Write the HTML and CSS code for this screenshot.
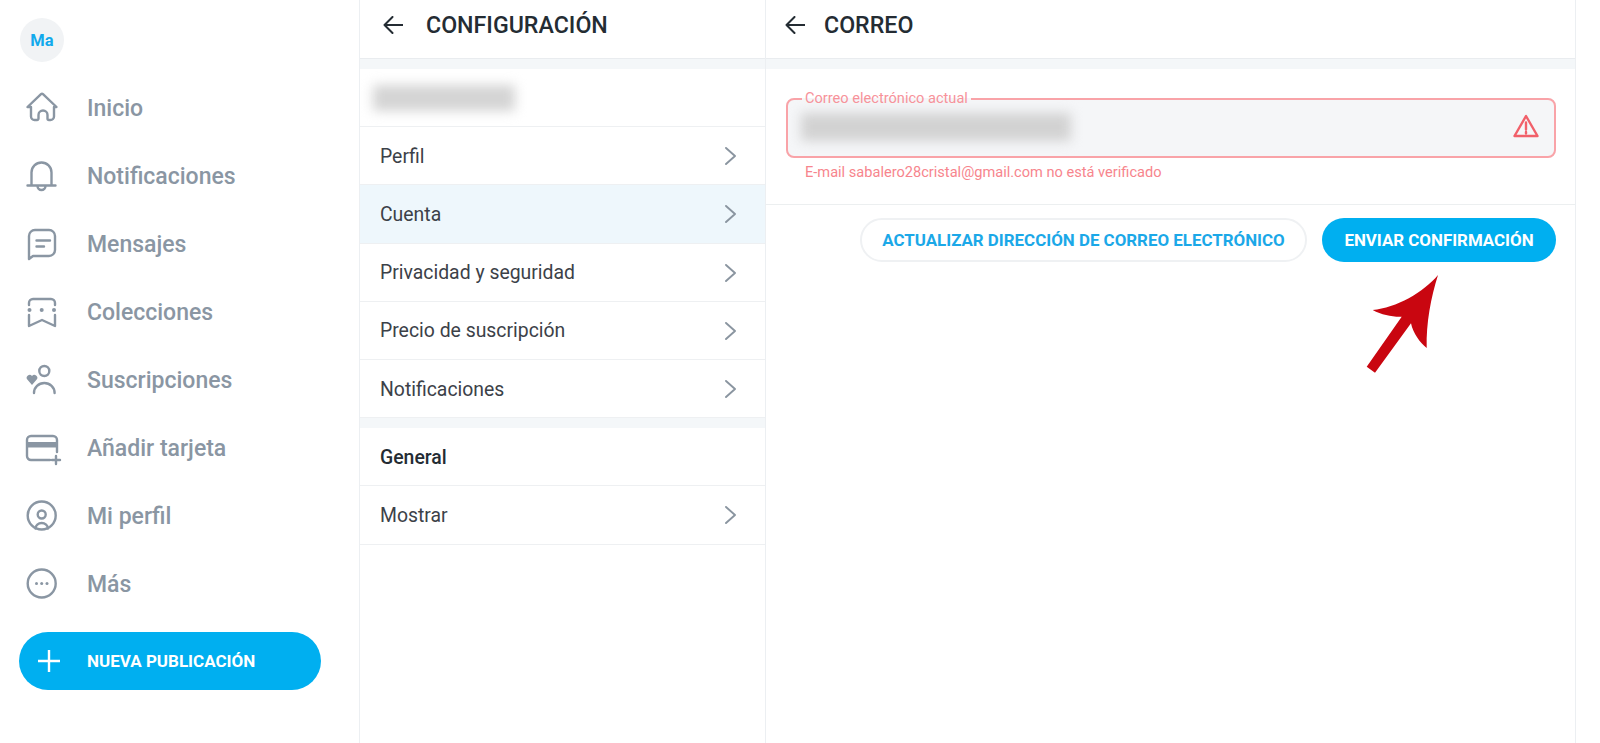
FILE: index.html
```html
<!DOCTYPE html>
<html lang="es">
<head>
<meta charset="utf-8">
<title>Correo</title>
<link rel="stylesheet" href="styles.css">
</head>
<body>
<div class="app">
  <aside class="sidebar">
    <div class="avatar">Ma</div>
    <nav class="nav">
      <a class="nav-item"><svg class="nav-icon" viewBox="0 0 32 32"><path d="M1.500 16 15 3.200a1.500 1.500 0 0 1 2 0L30.500 16H28v9.500a3.500 3.500 0 0 1-3.500 3.500h-1.500a1.500 1.500 0 0 1-1.500-1.500V24a4.500 4.500 0 0 0-9 0v3.500A1.500 1.500 0 0 1 11 29H8.500A3.500 3.500 0 0 1 5 25.500V16Z"/></svg><span>Inicio</span></a>
      <a class="nav-item"><svg class="nav-icon" viewBox="0 0 32 32"><path d="M1.500 26.500h28M5.500 26.500V13.500a10 10 0 0 1 10-10 10 10 0 0 1 10 10v13M11.500 27a4 4 0 0 0 8 0"/></svg><span>Notificaciones</span></a>
      <a class="nav-item"><svg class="nav-icon" viewBox="0 0 32 32"><path d="M3 32V9a6 6 0 0 1 6-6h14a6 6 0 0 1 6 6v14a6 6 0 0 1-6 6H7ZM10.500 13.500H24M10.500 19.500H18"/></svg><span>Mensajes</span></a>
      <a class="nav-item"><svg class="nav-icon" viewBox="0 0 32 32"><path d="M3 10V8a4 4 0 0 1 4-4h18a4 4 0 0 1 4 4v2M3 20v11l13-6 13 6V20"/><circle class="dot" cx="3.500" cy="15" r="2"/><circle class="dot" cx="15.700" cy="15" r="2"/><circle class="dot" cx="28" cy="15" r="2"/></svg><span>Colecciones</span></a>
      <a class="nav-item"><svg class="nav-icon" viewBox="0 0 32 32"><circle cx="18.300" cy="8" r="5"/><path d="M8 30a10.300 10 0 0 1 20.600 0"/><path class="dot" d="M6 22 1.300 16.500a2.800 2.800 0 0 1 4.700-3.500 2.800 2.800 0 0 1 4.700 3.500Z"/></svg><span>Suscripciones</span></a>
      <a class="nav-item"><svg class="nav-icon" viewBox="0 0 32 32"><path d="M24 29H5a4 4 0 0 1-4-4V9a4 4 0 0 1 4-4h22a4 4 0 0 1 4 4v12"/><path class="band" d="M1 11h30v5.500H1z"/><path d="M30 25v8M26 29h8"/></svg><span>Añadir tarjeta</span></a>
      <a class="nav-item"><svg class="nav-icon" viewBox="0 0 32 32"><circle cx="15.700" cy="16.500" r="14"/><circle cx="15.700" cy="15.500" r="4"/><path d="M9.500 29.500a6.200 5.500 0 0 1 12.400 0"/></svg><span>Mi perfil</span></a>
      <a class="nav-item"><svg class="nav-icon" viewBox="0 0 32 32"><circle cx="15.700" cy="16.500" r="14"/><circle class="dot" cx="10.500" cy="16.500" r="1.500"/><circle class="dot" cx="15.700" cy="16.500" r="1.500"/><circle class="dot" cx="21" cy="16.500" r="1.500"/></svg><span>Más</span></a>
    </nav>
    <button class="new-post"><svg class="plus" viewBox="0 0 22 22"><path d="M11 0v22M0 11h22"/></svg><span>NUEVA PUBLICACIÓN</span></button>
  </aside>

  <section class="settings">
    <header class="head">
      <svg class="back" viewBox="0 0 20 18"><path d="M19.500 9H1.500M9.500 1 1.500 9l8 8"/></svg>
      <h1 class="title">CONFIGURACIÓN</h1>
    </header>
    <div class="band-gap"></div>
    <div class="row"><div class="blur-name"></div></div>
    <a class="row">Perfil<svg class="chev" viewBox="0 0 11 18"><path d="m1 1 9 8-9 8"/></svg></a>
    <a class="row row-active">Cuenta<svg class="chev" viewBox="0 0 11 18"><path d="m1 1 9 8-9 8"/></svg></a>
    <a class="row">Privacidad y seguridad<svg class="chev" viewBox="0 0 11 18"><path d="m1 1 9 8-9 8"/></svg></a>
    <a class="row">Precio de suscripción<svg class="chev" viewBox="0 0 11 18"><path d="m1 1 9 8-9 8"/></svg></a>
    <a class="row">Notificaciones<svg class="chev" viewBox="0 0 11 18"><path d="m1 1 9 8-9 8"/></svg></a>
    <div class="band-gap"></div>
    <div class="row row-head">General</div>
    <a class="row">Mostrar<svg class="chev" viewBox="0 0 11 18"><path d="m1 1 9 8-9 8"/></svg></a>
  </section>

  <main class="mail">
    <header class="head head-mail">
      <svg class="back" viewBox="0 0 20 18"><path d="M19.500 9H1.500M9.500 1 1.500 9l8 8"/></svg>
      <h1 class="title">CORREO</h1>
    </header>
    <div class="band-gap"></div>
    <div class="form">
      <fieldset class="field">
        <legend class="field-label">Correo electrónico actual</legend>
        <div class="blur-mail"></div>
        <svg class="warn" viewBox="0 0 26 24"><path d="M13 2 1.500 22h23Z"/><path d="M13 8.500v7M13 18v1.500"/></svg>
      </fieldset>
      <p class="error">E-mail sabalero28cristal@gmail.com no está verificado</p>
    </div>
    <div class="actions">
      <button class="btn btn-outline">ACTUALIZAR DIRECCIÓN DE CORREO ELECTRÓNICO</button>
      <button class="btn btn-fill">ENVIAR CONFIRMACIÓN</button>
    </div>
  </main>
</div>
<svg class="pointer" viewBox="0 0 80 105"><path d="M72 2C58 19 30 35 6.700 37 16 42 26 44 35.700 43.700L.7 93.700l8.300 6 36-49.400C47 60 54 70 60.700 75 60 50 65 24 72 2Z"/></svg>
</body>
</html>
```

FILE: styles.css
```css
* { box-sizing: border-box; }
html, body { margin: 0; height: 743px; overflow: hidden; background: #fff; }
body { font-family: Roboto, "Liberation Sans", sans-serif; }
a { display: block; }

.app { display: flex; height: 743px; }

.sidebar {
  width: 360px;
  flex: none;
  border-right: 1px solid #eceff2;
  padding: 18px 0 0 20px;
}
.avatar {
  width: 44px;
  height: 44px;
  border-radius: 50%;
  background: #f1f3f5;
  color: #12a9ec;
  font-size: 16.500px;
  font-weight: 700;
  display: flex;
  align-items: center;
  justify-content: center;
}
.nav { margin-top: 11px; }
.nav-item {
  display: flex;
  align-items: center;
  height: 68px;
  padding-left: 6px;
  gap: 29px;
  color: #8a96a3;
  font-size: 23px;
  font-weight: 500;
}
.nav-item span { padding-top: 2px; }
.nav-icon {
  width: 32px;
  height: 32px;
  flex: none;
  overflow: visible;
  fill: none;
  stroke: #8a96a3;
  stroke-width: 2.400;
  stroke-linecap: round;
  stroke-linejoin: round;
}
.nav-icon .dot { fill: #8a96a3; stroke: none; }
.nav-icon .band { fill: #8a96a3; stroke: none; }

.new-post {
  margin: 15px 0 0 -1px;
  width: 302px;
  height: 58px;
  border: 0;
  border-radius: 29px;
  background: #00aff0;
  color: #fff;
  font-family: inherit;
  font-size: 17px;
  font-weight: 700;
  display: flex;
  align-items: center;
  gap: 27px;
  padding: 0 0 0 19px;
}
.plus { width: 22px; height: 22px; fill: none; stroke: #fff; stroke-width: 2.400; stroke-linecap: round; }

.settings {
  width: 406px;
  flex: none;
  border-right: 1px solid #eceff2;
}
.head {
  height: 59px;
  display: flex;
  align-items: center;
  padding: 0 0 8px 23px;
  gap: 23px;
  border-bottom: 1px solid #e9ecef;
}
.head-mail { padding: 0 0 8px 19px; gap: 19px; }
.back { width: 20px; height: 18px; flex: none; fill: none; stroke: #242c33; stroke-width: 2; stroke-linecap: round; stroke-linejoin: round; }
.title { margin: 0; font-size: 23.200px; font-weight: 500; color: #242c33; }

.band-gap { height: 10px; background: #f4f7f9; }

.row {
  height: 58.200px;
  display: flex;
  align-items: center;
  justify-content: space-between;
  padding: 1px 29px 0 20px;
  border-bottom: 1px solid #eef0f2;
  color: #3c4148;
  font-size: 19.400px;
}
.row-active { background: #eef7fc; }
.row-head { font-weight: 500; color: #242c33; }
.chev { width: 11px; height: 18px; fill: none; stroke: #8a95a0; stroke-width: 1.900; stroke-linecap: round; stroke-linejoin: round; }

.blur-name { width: 142px; height: 26px; margin-left: -7px; background: #d4d4d4; filter: blur(6px); }

.mail {
  width: 810px;
  flex: none;
  border-right: 1px solid #eceff2;
}
.form {
  height: 136px;
  padding: 21px 19px 0 20px;
  border-bottom: 1px solid #eceff0;
}
.field {
  position: relative;
  margin: 0;
  height: 68px;
  min-width: 0;
  padding: 0 0 0 13px;
  border: 2px solid #f9a3a8;
  border-radius: 8px;
  background: #f5f6f8;
  display: flex;
  align-items: center;
}
.field-label {
  padding: 0 3px;
  margin-left: 1px;
  font-size: 14.600px;
  line-height: 17px;
  color: #f7929a;
}
.blur-mail { width: 270px; height: 28px; margin-top: -9px; background: #d2d2d2; filter: blur(6px); }
.warn {
  position: absolute;
  right: 15px;
  top: 7px;
  width: 26px;
  height: 24px;
  fill: none;
  stroke: #f1606a;
  stroke-width: 2.400;
  stroke-linecap: round;
  stroke-linejoin: round;
}
.error { margin: 6px 0 0 19px; font-size: 14.600px; line-height: 17px; color: #f7858d; }

.actions {
  display: flex;
  justify-content: flex-end;
  gap: 15px;
  padding: 13px 19px 0 0;
}
.btn {
  height: 44px;
  border-radius: 22px;
  font-family: inherit;
  font-size: 16.900px;
  font-weight: 700;
  padding: 0;
}
.btn-outline { width: 447px; background: #fff; border: 2px solid #eff1f3; color: #1ba8e8; }
.btn-fill { width: 234px; background: #00aff0; border: 0; color: #fff; }

.pointer {
  position: absolute;
  left: 1366px;
  top: 273px;
  width: 80px;
  height: 105px;
  fill: #c90610;
}
```
